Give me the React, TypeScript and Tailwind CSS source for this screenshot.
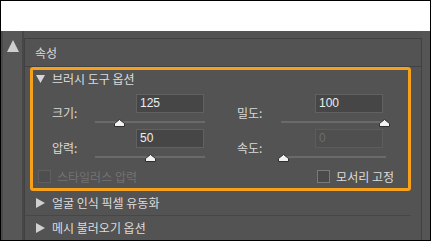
import React from "react";

const font = "font-['Noto_Sans_CJK_KR','Noto_Sans',sans-serif]";

function Thumb({ x }: { x: number }) {
  return (
    <svg
      className="absolute top-[6px]"
      style={{ left: x - 5.5 }}
      width="11"
      height="8"
      viewBox="0 0 11 8"
    >
      <path d="M5.5 0.5 L10.5 4.5 L10.5 7.5 L0.5 7.5 L0.5 4.5 Z" fill="#f2f2f2" stroke="#2e2e2e" strokeWidth="1" />
    </svg>
  );
}

function Slider({ w, x }: { w: number; x: number }) {
  return (
    <div className="relative h-[14px]" style={{ width: w }}>
      <div className="absolute left-0 right-0 top-[8px] h-[2px] bg-[#6a6a6a]" />
      <Thumb x={x} />
    </div>
  );
}

function Field({
  label,
  value,
  labelW,
  sliderW,
  inputMl,
  thumb,
  disabled,
}: {
  label: string;
  value: string;
  labelW: number;
  sliderW: number;
  inputMl: number;
  thumb: number;
  disabled?: boolean;
}) {
  return (
    <div className="flex">
      <div className="pt-[13px] text-[12px] leading-[12px] text-[#d9d9d9]" style={{ width: labelW }}>
        {label}
      </div>
      <div className="flex flex-col">
        <div
          className={
            disabled
              ? "h-[19px] w-[68px] border border-[#5c5c5c] bg-[#4f4f4f] pl-[3px] text-[12px] leading-[17px] text-[#6c6c6c] font-['Liberation_Sans',sans-serif]"
              : "h-[19px] w-[68px] border border-[#616161] bg-[#464646] pl-[3px] text-[12px] leading-[17px] text-[#ececec] font-['Liberation_Sans',sans-serif]"
          }
          style={{ marginLeft: inputMl }}
        >
          {value}
        </div>
        <Slider w={sliderW} x={thumb} />
      </div>
    </div>
  );
}

function Tri({ down }: { down?: boolean }) {
  return down ? (
    <svg width="9" height="8" viewBox="0 0 9 8">
      <path d="M0 0 L9 0 L4.5 8 Z" fill="#d6d6d6" />
    </svg>
  ) : (
    <svg width="9" height="10" viewBox="0 0 9 10">
      <path d="M0 0 L9 5 L0 10 Z" fill="#d0d0d0" />
    </svg>
  );
}

export default function App() {
  return (
    <div className={`w-[431px] h-[241px] border border-black bg-[#535353] flex flex-col overflow-hidden ${font}`}>
      <div className="h-[30px] bg-white shrink-0" />
      <div className="flex flex-1 min-h-0">
        {/* left scrollbar */}
        <div className="w-[23px] shrink-0 flex">
          <div className="w-[2px] bg-[#4a4a4a]" />
          <div className="w-[19px] bg-[#575757] flex justify-center pt-[9px]">
            <svg width="12" height="12" viewBox="0 0 12 12">
              <path d="M6 0 L12 12 L0 12 Z" fill="#cfcfcf" />
            </svg>
          </div>
          <div className="w-[2px] bg-[#474747]" />
        </div>
        {/* panel */}
        <div className="w-[398px] shrink-0 mt-[7px] border-l border-t border-r border-[#414141] flex flex-col">
          <div className="h-[27px] shrink-0 flex items-center pl-[10px] text-[12px] text-[#d9d9d9]">속성</div>
          <div className="h-px shrink-0 bg-[#424242]" />
          <div className="flex flex-col mr-[10px]">
            <div className="ml-[5px] w-[381px] h-[124px] border-[3px] border-[#f7a01a] rounded-[3px] flex flex-col">
              <div className="h-[18px] flex items-center pl-[3px] gap-[7px] text-[12px] text-[#dcdcdc]">
                <Tri down />
                <span className="leading-[12px]">브러시 도구 옵션</span>
              </div>
              <div className="mt-[6px] pl-[19px] flex flex-col gap-[2px]">
                <div className="flex gap-[32px]">
                  <Field label="크기:" value="125" labelW={43} sliderW={110} inputMl={41} thumb={24} />
                  <Field label="밀도:" value="100" labelW={44} sliderW={105} inputMl={34} thumb={103} />
                </div>
                <div className="flex gap-[32px]">
                  <Field label="압력:" value="50" labelW={43} sliderW={110} inputMl={41} thumb={55} />
                  <Field label="속도:" value="0" labelW={44} sliderW={105} inputMl={34} thumb={2} disabled />
                </div>
              </div>
              <div className="mt-[8px] flex items-center pl-[5px] pr-[14px] text-[12px] leading-[13px]">
                <div className="flex items-center gap-[6px] text-[#727272]">
                  <div className="w-[13px] h-[13px] border border-[#5f5f5f] bg-[#4e4e4e]" />
                  <span>스타일러스 압력</span>
                </div>
                <div className="ml-auto flex items-center gap-[6px] text-[#dcdcdc]">
                  <div className="w-[13px] h-[13px] border border-[#7a7a7a] bg-[#4a4a4a]" />
                  <span>모서리 고정</span>
                </div>
              </div>
            </div>
            <div className="h-[24px] flex items-center pl-[11px] gap-[7px] text-[12px] text-[#dcdcdc]">
              <Tri />
              <span className="leading-[12px]">얼굴 인식 픽셀 유동화</span>
            </div>
            <div className="h-px bg-[#474747]" />
            <div className="h-[24px] flex items-center pl-[11px] gap-[7px] text-[12px] text-[#dcdcdc]">
              <Tri />
              <span className="leading-[12px]">메시 불러오기 옵션</span>
            </div>
          </div>
        </div>
        <div className="flex-1 bg-[#555555]" />
      </div>
    </div>
  );
}
